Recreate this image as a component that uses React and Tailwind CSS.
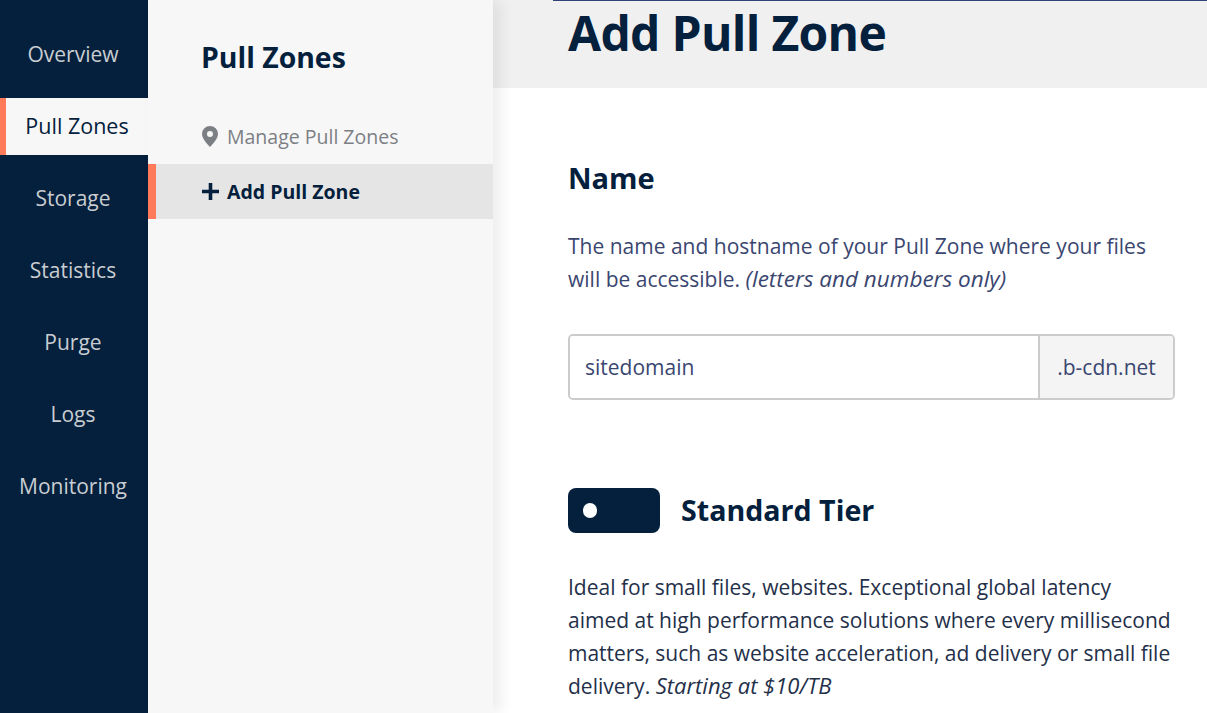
import React from "react";

const navItems = ["Overview", "Pull Zones", "Storage", "Statistics", "Purge", "Logs", "Monitoring"];

function Sidebar() {
  return (
    <nav className="w-[148px] shrink-0 bg-[#04203c] pt-[26px] flex flex-col gap-[15px]">
      {navItems.map((name) => (
        <a
          key={name}
          className={
            name === "Pull Zones"
              ? "h-[57px] flex items-center justify-center border-l-[6px] border-[#ff7a59] bg-[#f7f7f7] text-[#04203c] text-[21.500px]"
              : "h-[57px] flex items-center justify-center pr-[2px] text-[#c9cdd2] text-[21px]"
          }
        >
          {name}
        </a>
      ))}
    </nav>
  );
}

function SubMenu() {
  return (
    <aside className="w-[345px] shrink-0 bg-[#f7f7f7] z-10 shadow-[8px_0_14px_rgba(0,0,0,0.07)]">
      <h2 className="pl-[53px] pt-[37px] text-[28.400px] leading-[40px] font-bold text-[#04203c]">Pull Zones</h2>
      <a className="mt-[32px] h-[55px] pl-[54px] flex items-center gap-[9px] text-[19.500px] text-[#7c7f84]">
        <svg width="16" height="21" viewBox="0 0 16 21" className="shrink-0">
          <path
            fill="#7c7f84"
            fillRule="evenodd"
            d="M8 0a8 8 0 0 1 8 8c0 4.500-5 10-8 13-3-3-8-8.500-8-13a8 8 0 0 1 8-8zm0 5a3 3 0 1 0 0 6 3 3 0 0 0 0-6z"
          />
        </svg>
        Manage Pull Zones
      </a>
      <a className="h-[55px] pl-[46px] flex items-center gap-[8px] border-l-[8px] border-[#ff7a59] bg-[#e5e5e5] text-[19.500px] font-bold text-[#04203c]">
        <svg width="17" height="17" viewBox="0 0 17 17" className="shrink-0">
          <path fill="#04203c" d="M6.700 0h3.600v6.700H17v3.600h-6.700V17H6.700v-6.700H0V6.700h6.700z" />
        </svg>
        Add Pull Zone
      </a>
    </aside>
  );
}

export default function App() {
  return (
    <div className="h-[713px] w-[1207px] flex overflow-hidden bg-white font-['Open_Sans',sans-serif]">
      <Sidebar />
      <SubMenu />
      <main className="flex-1 min-w-0">
        <header className="h-[88px] bg-[#f0f0f0] pl-[75px] relative">
          <div className="absolute top-0 left-[60px] right-0 h-[1px] bg-[#2f4379]" />
          <h1 className="text-[48px] leading-[66px] font-bold tracking-[-0.700px] text-[#04203c]">Add Pull Zone</h1>
        </header>
        <div className="pl-[75px] pr-[32px] pt-[70px]">
          <h3 className="text-[29px] leading-[40px] font-bold text-[#04203c]">Name</h3>
          <p className="mt-[32px] text-[21px] leading-[33px] text-[#3a4670]">
            The name and hostname of your Pull Zone where your files will be accessible.{" "}
            <em className="text-[22.500px] leading-none">(letters and numbers only)</em>
          </p>
          <div className="mt-[38px] h-[66px] flex border-2 border-[#cccccc] rounded-[5px] text-[21px] text-[#3a4670] overflow-hidden">
            <div className="flex-1 pl-[15px] pt-[2px] flex items-center bg-white">sitedomain</div>
            <div className="w-[135px] pt-[2px] flex items-center justify-center bg-[#f4f4f4] border-l-2 border-[#cccccc]">.b-cdn.net</div>
          </div>
          <div className="mt-[87px] flex items-center gap-[21px]">
            <div className="w-[92px] h-[45px] rounded-[8px] bg-[#04203c] flex items-start pl-[15px] pt-[15px]">
              <span className="w-[14px] h-[15px] rounded-full bg-white" />
            </div>
            <h3 className="text-[28.600px] leading-[46px] font-bold text-[#04203c]">Standard Tier</h3>
          </div>
          <p className="mt-[38px] text-[21px] leading-[33px] text-[#243049]">
            Ideal for small files, websites. Exceptional global latency aimed at high performance solutions where every
            millisecond matters, such as website acceleration, ad delivery or small file delivery.{" "}
            <em className="text-[22px] leading-none">Starting at $10/TB</em>
          </p>
        </div>
      </main>
    </div>
  );
}
